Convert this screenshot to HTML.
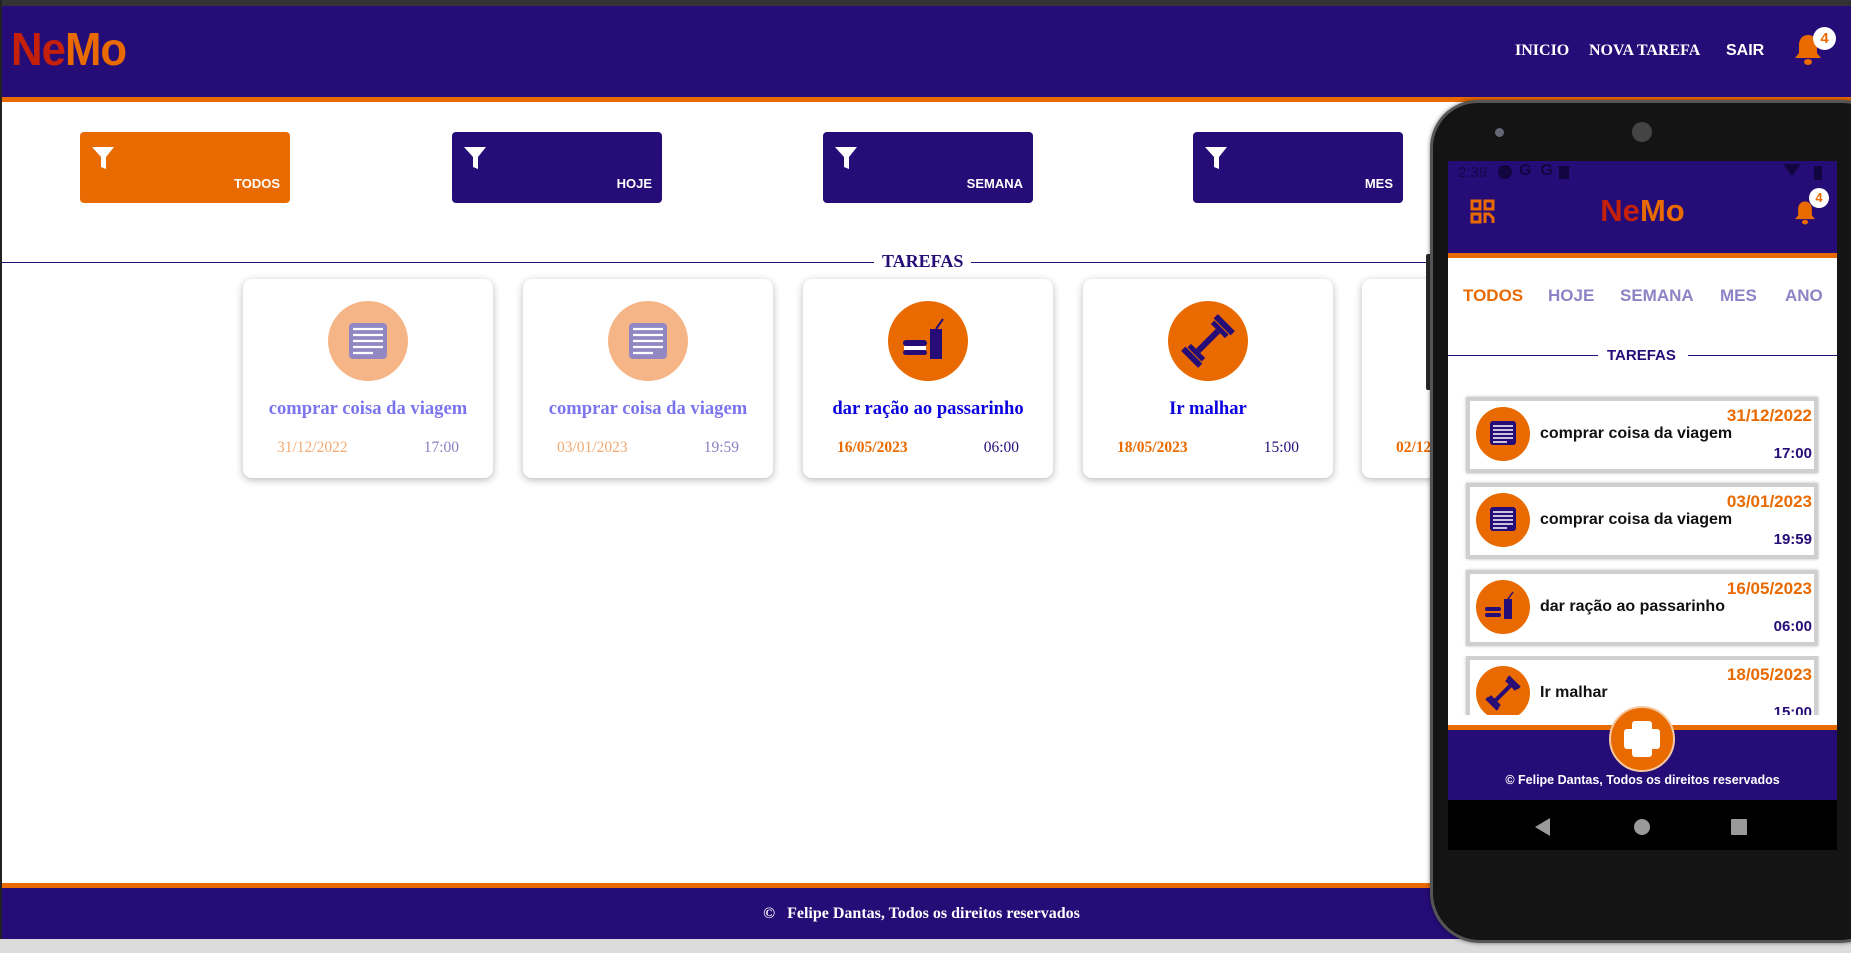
<!DOCTYPE html>
<html><head><meta charset="utf-8">
<style>
*{margin:0;padding:0;box-sizing:border-box}
body{width:1851px;height:953px;overflow:hidden;background:#fff;position:relative;font-family:"Liberation Sans",sans-serif}
.abs{position:absolute}
.top{left:0;top:0;width:1851px;height:6px;background:#333}
.hdr{left:0;top:6px;width:1851px;height:91px;background:#250c77}
.hl{left:0;top:97px;width:1851px;height:5px;background:#e96a00}
.logo{left:11px;top:22px;font-size:46px;font-weight:bold;letter-spacing:-1px;transform:scaleX(0.95);transform-origin:left}
.nav{top:42px;color:#fff;font-family:"Liberation Serif",serif;font-weight:bold;font-size:16px}
.fb{top:132px;width:210px;height:71px;border-radius:4px;background:#250c77}
.fb span{position:absolute;right:10px;bottom:12px;color:#fff;font-weight:bold;font-size:13px}
.fb svg{position:absolute;left:11px;top:13px}
.card{top:279px;width:250px;height:199px;background:#fff;border-radius:9px;box-shadow:0 2px 8px rgba(0,0,0,.28)}
.circ{position:absolute;left:85px;top:22px;width:80px;height:80px;border-radius:50%}
.ttl{position:absolute;left:0;width:100%;top:119px;text-align:center;font-family:"Liberation Serif",serif;font-weight:bold;font-size:18.6px}
.dt{position:absolute;left:34px;top:160px;font-family:"Liberation Serif",serif;font-size:15.5px;font-weight:bold}
.tm{position:absolute;right:34px;top:160px;font-family:"Liberation Serif",serif;font-size:15.5px}
.foot{left:0;top:888px;width:1851px;height:51px;background:#250c77}
.fl{left:0;top:883px;width:1851px;height:5px;background:#e96a00}
.sb{left:0;top:939px;width:1851px;height:14px;background:#dcdcdc}
.pi{left:0;width:100%;text-align:center}
.li{left:1466px;width:352px;height:76px;background:#fff;border:4px solid #cfcfcf;box-shadow:0 0 3px #bbb}
.li .c{position:absolute;left:6px;top:6px;width:54px;height:54px;border-radius:50%;background:#e96a00}
.li .t{position:absolute;left:70px;top:24px;font-weight:bold;font-size:16px;color:#111}
.li .d{position:absolute;right:2px;top:5px;font-weight:bold;font-size:17px;color:#e96a00}
.li .h{position:absolute;right:2px;top:44px;font-weight:bold;font-size:15px;color:#250c77}
.tab{position:absolute;top:125px;font-weight:bold;font-size:17px;color:#8c84c4}
</style></head><body>
<div class="abs top"></div>
<div class="abs hdr"></div>
<div class="abs hl"></div>
<div class="abs logo"><span style="color:#c4200a">Ne</span><span style="color:#e96a00">Mo</span></div>
<div class="abs nav" style="left:1515px">INICIO</div>
<div class="abs nav" style="left:1589px">NOVA TAREFA</div>
<div class="abs nav" style="left:1726px;font-family:'Liberation Sans',sans-serif">SAIR</div>
<svg class="abs" style="left:1793px;top:33px" width="30" height="34" viewBox="0 0 30 34"><path d="M15 2c-6 0-9 5-9 10v8l-4 5h26l-4-5v-8c0-5-3-10-9-10z" fill="#e96a00"/><ellipse cx="15" cy="29" rx="4" ry="3" fill="#e96a00"/></svg>
<div class="abs" style="left:1813px;top:27px;width:23px;height:23px;border-radius:50%;background:#fff;color:#e96a00;font-weight:bold;font-size:15px;text-align:center;line-height:23px">4</div>

<div class="abs fb" style="left:80px;background:#e96a00"><svg width="24" height="26" viewBox="0 0 24 26"><path d="M1 2h22l-8 10v12l-5-2V12z" fill="#fff"/></svg><span>TODOS</span></div>
<div class="abs fb" style="left:452px"><svg width="24" height="26" viewBox="0 0 24 26"><path d="M1 2h22l-8 10v12l-5-2V12z" fill="#fff"/></svg><span>HOJE</span></div>
<div class="abs fb" style="left:823px"><svg width="24" height="26" viewBox="0 0 24 26"><path d="M1 2h22l-8 10v12l-5-2V12z" fill="#fff"/></svg><span>SEMANA</span></div>
<div class="abs fb" style="left:1193px"><svg width="24" height="26" viewBox="0 0 24 26"><path d="M1 2h22l-8 10v12l-5-2V12z" fill="#fff"/></svg><span>MES</span></div>

<div class="abs" style="left:0;top:262px;width:1500px;height:1px;background:#250c77"></div>
<div class="abs" style="left:874px;top:251px;padding:0 8px;background:#fff;font-family:'Liberation Serif',serif;font-weight:bold;font-size:18px;color:#250c77">TAREFAS</div>

<div class="abs card" style="left:243px"><div class="circ" style="background:#f5b587"><svg width="80" height="80" viewBox="0 0 80 80"><rect x="21" y="22" width="38" height="36" rx="4" fill="#9187c3"/><g stroke="#fff" stroke-width="2.2"><path d="M25 28h30M25 34h30M25 40h30M25 46h30M25 52h20"/></g></svg></div><div class="ttl" style="color:#7b74ef">comprar coisa da viagem</div><div class="dt" style="color:#f4aa72;font-weight:normal">31/12/2022</div><div class="tm" style="color:#8a80c4">17:00</div></div>
<div class="abs card" style="left:523px"><div class="circ" style="background:#f5b587"><svg width="80" height="80" viewBox="0 0 80 80"><rect x="21" y="22" width="38" height="36" rx="4" fill="#9187c3"/><g stroke="#fff" stroke-width="2.2"><path d="M25 28h30M25 34h30M25 40h30M25 46h30M25 52h20"/></g></svg></div><div class="ttl" style="color:#7b74ef">comprar coisa da viagem</div><div class="dt" style="color:#f4aa72;font-weight:normal">03/01/2023</div><div class="tm" style="color:#8a80c4">19:59</div></div>
<div class="abs card" style="left:803px"><div class="circ" style="background:#e96a00"><svg width="80" height="80" viewBox="0 0 80 80"><rect x="42" y="28" width="12" height="30" fill="#250c77"/><path d="M48 28l7-10" stroke="#250c77" stroke-width="2"/><rect x="15" y="39" width="24" height="6" rx="3" fill="#250c77"/><rect x="16" y="45" width="22" height="4" fill="#fff"/><rect x="15" y="49" width="24" height="5" rx="2.5" fill="#250c77"/></svg></div><div class="ttl" style="color:#0a00e0">dar ração ao passarinho</div><div class="dt" style="color:#e96a00">16/05/2023</div><div class="tm" style="color:#250c77">06:00</div></div>
<div class="abs card" style="left:1083px"><div class="circ" style="background:#e96a00"><svg width="80" height="80" viewBox="0 0 80 80"><g transform="rotate(-45 40 40)"><rect x="26" y="37" width="28" height="6" fill="#250c77"/><rect x="14" y="28" width="6" height="24" fill="#250c77"/><rect x="21" y="30" width="5" height="20" fill="#250c77"/><rect x="54" y="30" width="5" height="20" fill="#250c77"/><rect x="60" y="28" width="6" height="24" fill="#250c77"/></g></svg></div><div class="ttl" style="color:#0a00e0">Ir malhar</div><div class="dt" style="color:#e96a00">18/05/2023</div><div class="tm" style="color:#250c77">15:00</div></div>
<div class="abs card" style="left:1362px"><div class="dt" style="color:#e96a00">02/12/2023</div></div>

<div class="abs fl"></div>
<div class="abs foot"></div>
<div class="abs" style="left:0;top:905px;width:1851px;text-align:center;color:#fff;font-family:'Liberation Serif',serif;font-weight:bold;font-size:16px;padding-right:8px">©&nbsp;&nbsp;&nbsp;Felipe Dantas, Todos os direitos reservados</div>
<div class="abs sb"></div>
<div class="abs" style="left:0;top:0;width:2px;height:939px;background:#222"></div>

<!-- phone -->
<div class="abs" style="left:1426px;top:254px;width:8px;height:136px;background:#2a2a2a;border-radius:2px"></div>
<div class="abs" style="left:1430px;top:100px;width:460px;height:843px;background:#141414;border-radius:48px 48px 50px 50px;border:3px solid #555;box-shadow:0 0 4px rgba(0,0,0,.5)"></div>
<div class="abs" style="left:1495px;top:128px;width:9px;height:9px;border-radius:50%;background:#667"></div>
<div class="abs" style="left:1632px;top:122px;width:20px;height:20px;border-radius:50%;background:#444"></div>
<div class="abs" style="left:1448px;top:161px;width:389px;height:689px;background:#fff;overflow:hidden">
 <div class="abs" style="left:0;top:0;width:389px;height:92px;background:#250c77"></div>
 <div class="abs" style="left:10px;top:3px;color:#160848;font-size:15px">2:39</div>
 <div class="abs" style="left:50px;top:4px;width:14px;height:14px;border-radius:50%;background:#120640"></div>
 <div class="abs" style="left:71px;top:1px;color:#120640;font-weight:bold;font-size:16px">G&nbsp;&nbsp;G</div>
 <div class="abs" style="left:111px;top:5px;width:10px;height:13px;background:#120640"></div>
 <div class="abs" style="left:335px;top:3px;width:0;height:0;border-left:9px solid transparent;border-right:9px solid transparent;border-top:12px solid #120640"></div>
 <div class="abs" style="left:366px;top:5px;width:8px;height:14px;background:#120640"></div>
 <svg class="abs" style="left:22px;top:38px" width="26" height="26" viewBox="0 0 26 26" fill="none" stroke="#e96a00" stroke-width="3"><rect x="2" y="2" width="8" height="8"/><rect x="15" y="2" width="8" height="8"/><rect x="2" y="15" width="8" height="8"/><path d="M15 24V15h4l4 4v5"/></svg>
 <div class="abs pi" style="top:32px;font-size:31px;font-weight:bold"><span style="color:#c4200a">Ne</span><span style="color:#e96a00">Mo</span></div>
 <svg class="abs" style="left:345px;top:39px" width="24" height="26" viewBox="0 0 30 34"><path d="M15 2c-6 0-9 5-9 10v8l-4 5h26l-4-5v-8c0-5-3-10-9-10z" fill="#e96a00"/><ellipse cx="15" cy="29" rx="4" ry="3" fill="#e96a00"/></svg>
 <div class="abs" style="left:361px;top:27px;width:20px;height:20px;border-radius:50%;background:#fff;color:#e96a00;font-weight:bold;font-size:13px;text-align:center;line-height:20px">4</div>
 <div class="abs" style="left:0;top:92px;width:389px;height:5px;background:#e96a00"></div>
 <div class="tab" style="left:15px;color:#e96a00">TODOS</div>
 <div class="tab" style="left:100px">HOJE</div>
 <div class="tab" style="left:172px">SEMANA</div>
 <div class="tab" style="left:272px">MES</div>
 <div class="tab" style="left:337px">ANO</div>
 <div class="abs" style="left:0;top:194px;width:150px;height:1px;background:#250c77"></div>
 <div class="abs" style="left:240px;top:194px;width:149px;height:1px;background:#250c77"></div>
 <div class="abs" style="left:159px;top:186px;font-weight:bold;font-size:15px;color:#250c77">TAREFAS</div>
</div>
<div class="abs li" style="top:397px"><div class="c"><svg width="54" height="54" viewBox="0 0 54 54"><rect x="14" y="14" width="26" height="24" rx="3" fill="#250c77"/><path d="M17 19h20M17 23h20M17 27h20M17 31h20M17 35h14" stroke="#fff" stroke-width="1.5"/></svg></div><div class="t">comprar coisa da viagem</div><div class="d">31/12/2022</div><div class="h">17:00</div></div>
<div class="abs li" style="top:483px"><div class="c"><svg width="54" height="54" viewBox="0 0 54 54"><rect x="14" y="14" width="26" height="24" rx="3" fill="#250c77"/><path d="M17 19h20M17 23h20M17 27h20M17 31h20M17 35h14" stroke="#fff" stroke-width="1.5"/></svg></div><div class="t">comprar coisa da viagem</div><div class="d">03/01/2023</div><div class="h">19:59</div></div>
<div class="abs li" style="top:570px"><div class="c"><svg width="54" height="54" viewBox="0 0 54 54"><rect x="28" y="19" width="8" height="20" fill="#250c77"/><path d="M32 19l5-7" stroke="#250c77" stroke-width="1.5"/><rect x="9" y="27" width="16" height="4" rx="2" fill="#250c77"/><rect x="9" y="33" width="16" height="4" rx="2" fill="#250c77"/></svg></div><div class="t">dar ração ao passarinho</div><div class="d">16/05/2023</div><div class="h">06:00</div></div>
<div class="abs" style="left:1448px;top:656px;width:389px;height:59px;overflow:hidden"><div class="li" style="position:absolute;left:18px;top:0"><div class="c"><svg width="54" height="54" viewBox="0 0 54 54"><g transform="rotate(-45 27 27)"><rect x="17" y="25" width="20" height="4" fill="#250c77"/><rect x="10" y="19" width="4" height="16" fill="#250c77"/><rect x="14" y="20" width="3" height="14" fill="#250c77"/><rect x="37" y="20" width="3" height="14" fill="#250c77"/><rect x="40" y="19" width="4" height="16" fill="#250c77"/></g></svg></div><div class="t">Ir malhar</div><div class="d">18/05/2023</div><div class="h">15:00</div></div></div>
<div class="abs" style="left:1448px;top:725px;width:389px;height:5px;background:#e96a00"></div>
<div class="abs" style="left:1448px;top:730px;width:389px;height:70px;background:#250c77"></div>
<div class="abs" style="left:1448px;top:773px;width:389px;text-align:center;color:#fff;font-weight:bold;font-size:12.5px">© Felipe Dantas, Todos os direitos reservados</div>
<div class="abs" style="left:1609px;top:706px;width:66px;height:66px;border-radius:50%;background:#e96a00;border:2px solid #f7c9a0"></div>
<div class="abs" style="left:1632px;top:721px;width:20px;height:36px;background:#fff;border-radius:3px"></div>
<div class="abs" style="left:1624px;top:729px;width:36px;height:20px;background:#fff;border-radius:3px"></div>
<div class="abs" style="left:1448px;top:800px;width:389px;height:50px;background:#000"></div>
<div class="abs" style="left:1535px;top:818px;width:0;height:0;border-top:9px solid transparent;border-bottom:9px solid transparent;border-right:15px solid #9a9a9a"></div>
<div class="abs" style="left:1634px;top:819px;width:16px;height:16px;border-radius:50%;background:#9a9a9a"></div>
<div class="abs" style="left:1731px;top:819px;width:16px;height:16px;background:#9a9a9a;border-radius:1px"></div>
</body></html>
